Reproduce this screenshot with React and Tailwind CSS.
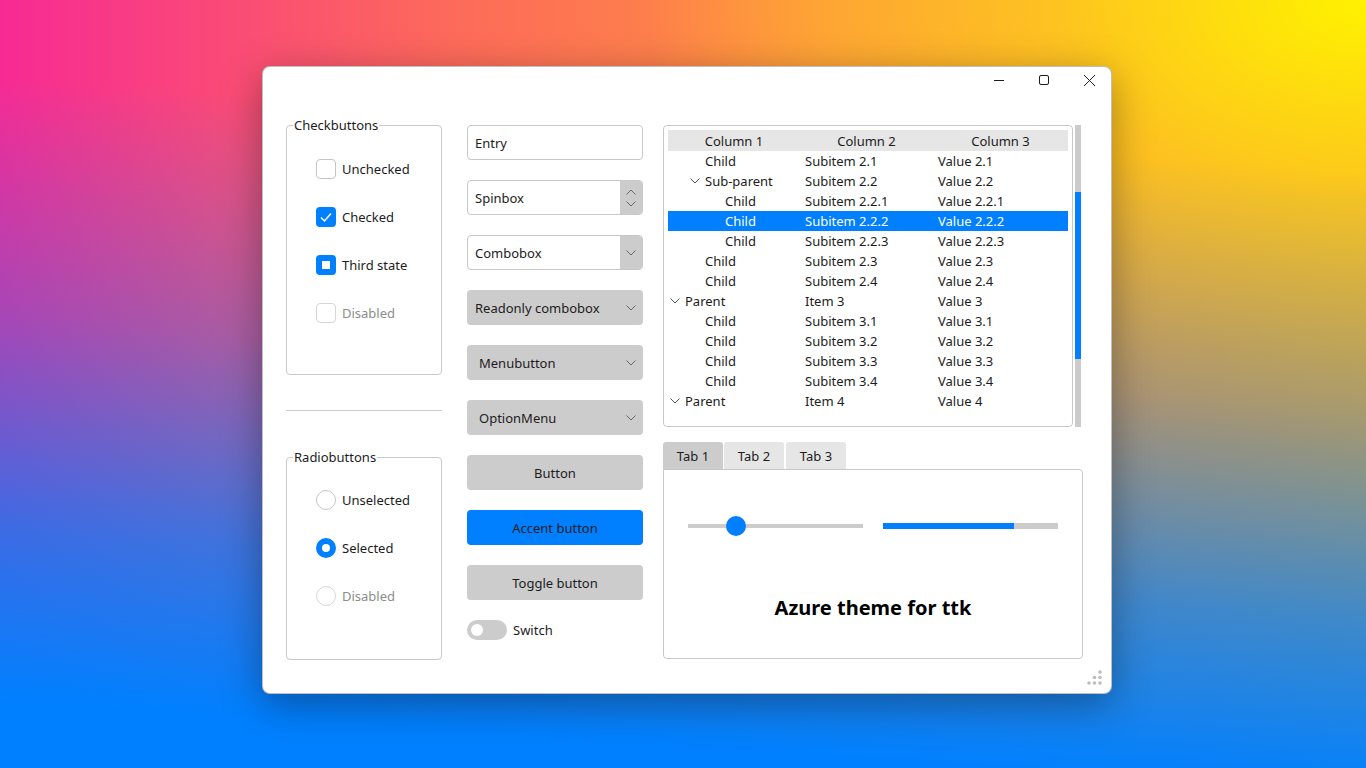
import React from "react";

const TXT = "text-[#1c1c1c]";

function Chevron({ up = false, color = "#6a6a6a" }) {
  return (
    <svg width="10" height="6" viewBox="0 0 10 6" className="block">
      <polyline
        points={up ? "0.5,5.5 5,1 9.5,5.5" : "0.5,0.5 5,5 9.5,0.5"}
        fill="none"
        stroke={color}
        strokeWidth="1"
      />
    </svg>
  );
}

function CheckRow({ state, label, disabled }) {
  let box;
  if (state === "checked") {
    box = (
      <div className="w-[20px] h-[20px] rounded-[4px] bg-[#007fff] flex items-center justify-center">
        <svg width="20" height="20" viewBox="0 0 20 20">
          <polyline points="5,10.5 8.5,14 15,6.5" fill="none" stroke="#fff" strokeWidth="1.5" />
        </svg>
      </div>
    );
  } else if (state === "third") {
    box = (
      <div className="w-[20px] h-[20px] rounded-[4px] bg-[#007fff] flex items-center justify-center">
        <div className="w-[8px] h-[8px] bg-white" />
      </div>
    );
  } else {
    box = (
      <div
        className={`w-[20px] h-[20px] rounded-[4px] border ${
          disabled ? "border-[#d6d6d6]" : "border-[#c4c4c4]"
        } bg-white`}
      />
    );
  }
  return (
    <div className="flex items-center h-[20px] gap-[6px]">
      {box}
      <span className={disabled ? "text-[#8c8c8c]" : TXT}>{label}</span>
    </div>
  );
}

function RadioRow({ selected, label, disabled }) {
  return (
    <div className="flex items-center h-[20px] gap-[6px]">
      {selected ? (
        <div className="w-[20px] h-[20px] rounded-full bg-[#007fff] flex items-center justify-center">
          <div className="w-[8px] h-[8px] rounded-full bg-white" />
        </div>
      ) : (
        <div
          className={`w-[20px] h-[20px] rounded-full border ${
            disabled ? "border-[#d6d6d6]" : "border-[#c4c4c4]"
          } bg-white`}
        />
      )}
      <span className={disabled ? "text-[#8c8c8c]" : TXT}>{label}</span>
    </div>
  );
}

function LabelFrame({ label, className, children }) {
  return (
    <div className={`relative border border-[#c8c8c8] rounded-[4px] ${className}`}>
      <span className={`absolute top-[-10px] left-[6px] bg-white px-[1px] leading-[18px] ${TXT}`}>
        {label}
      </span>
      {children}
    </div>
  );
}

const rows = [
  { lvl: 1, c: ["Child", "Subitem 2.1", "Value 2.1"] },
  { lvl: 1, exp: true, c: ["Sub-parent", "Subitem 2.2", "Value 2.2"] },
  { lvl: 2, c: ["Child", "Subitem 2.2.1", "Value 2.2.1"] },
  { lvl: 2, sel: true, c: ["Child", "Subitem 2.2.2", "Value 2.2.2"] },
  { lvl: 2, c: ["Child", "Subitem 2.2.3", "Value 2.2.3"] },
  { lvl: 1, c: ["Child", "Subitem 2.3", "Value 2.3"] },
  { lvl: 1, c: ["Child", "Subitem 2.4", "Value 2.4"] },
  { lvl: 0, exp: true, c: ["Parent", "Item 3", "Value 3"] },
  { lvl: 1, c: ["Child", "Subitem 3.1", "Value 3.1"] },
  { lvl: 1, c: ["Child", "Subitem 3.2", "Value 3.2"] },
  { lvl: 1, c: ["Child", "Subitem 3.3", "Value 3.3"] },
  { lvl: 1, c: ["Child", "Subitem 3.4", "Value 3.4"] },
  { lvl: 0, exp: true, c: ["Parent", "Item 4", "Value 4"] },
];

const indent = { 0: "w-0", 1: "w-[20px]", 2: "w-[40px]" };

export default function App() {
  return (
    <div className="w-full h-[768px] overflow-hidden pl-[262px] pt-[66px] bg-[linear-gradient(184deg,rgba(0,128,255,0)_20%,rgba(0,128,255,0.33)_48%,rgba(0,128,255,0.75)_72%,#0080ff_92%),radial-gradient(ellipse_720px_430px_at_100%_0%,#fff200_0%,rgba(255,220,20,0.6)_45%,rgba(255,200,40,0)_100%),linear-gradient(to_right,#f72a94,#fd6a5a_33%,#fe9040_60%,#f8a428_100%)] font-['Noto_Sans',sans-serif] text-[13px]">
      <div className="relative w-[850px] h-[628px] bg-white rounded-[8px] border border-black/25 shadow-[0_10px_40px_rgba(0,0,0,0.35)] flex flex-col">
        {/* title bar */}
        <div className="h-[30px] flex justify-end items-start pt-[8px] pr-[16px] gap-[35px]">
          <svg width="10" height="10" viewBox="0 0 10 10">
            <line x1="0" y1="5.5" x2="10" y2="5.5" stroke="#1c1c1c" strokeWidth="1" />
          </svg>
          <svg width="10" height="10" viewBox="0 0 10 10">
            <rect x="0.5" y="0.5" width="9" height="9" rx="1.5" fill="none" stroke="#1c1c1c" strokeWidth="1" />
          </svg>
          <svg width="11" height="11" viewBox="0 0 11 11">
            <line x1="0" y1="0" x2="11" y2="11" stroke="#1c1c1c" strokeWidth="1" />
            <line x1="11" y1="0" x2="0" y2="11" stroke="#1c1c1c" strokeWidth="1" />
          </svg>
        </div>

        {/* content */}
        <div className="flex pl-[23px] pt-[28px] leading-[20px]">
          {/* column 1 */}
          <div className="w-[156px] flex flex-col">
            <LabelFrame label="Checkbuttons" className="h-[250px]">
              <div className="flex flex-col pt-[33px] pl-[29px] gap-[28px]">
                <CheckRow state="unchecked" label="Unchecked" />
                <CheckRow state="checked" label="Checked" />
                <CheckRow state="third" label="Third state" />
                <CheckRow state="unchecked" label="Disabled" disabled />
              </div>
            </LabelFrame>
            <div className="mt-[35px] h-px bg-[#cdcdcd]" />
            <LabelFrame label="Radiobuttons" className="mt-[46px] h-[203px]">
              <div className="flex flex-col pt-[32px] pl-[29px] gap-[28px]">
                <RadioRow label="Unselected" />
                <RadioRow selected label="Selected" />
                <RadioRow label="Disabled" disabled />
              </div>
            </LabelFrame>
          </div>

          {/* column 2 */}
          <div className={`ml-[25px] w-[176px] flex flex-col gap-[20px] ${TXT}`}>
            <div className="h-[35px] border border-[#c8c8c8] rounded-[4px] pl-[7px] flex items-center">Entry</div>
            <div className="h-[35px] border border-[#c8c8c8] rounded-[4px] flex overflow-hidden">
              <div className="flex-1 pl-[7px] flex items-center">Spinbox</div>
              <div className="w-[22px] bg-[#cccccc] flex flex-col items-center justify-center gap-[6px]">
                <Chevron up />
                <Chevron />
              </div>
            </div>
            <div className="h-[35px] border border-[#c8c8c8] rounded-[4px] flex overflow-hidden">
              <div className="flex-1 pl-[7px] flex items-center">Combobox</div>
              <div className="w-[22px] bg-[#cccccc] flex items-center justify-center">
                <Chevron />
              </div>
            </div>
            <div className="h-[35px] bg-[#cccccc] rounded-[4px] pl-[8px] pr-[7px] flex items-center justify-between">
              <span>Readonly combobox</span>
              <Chevron />
            </div>
            <div className="h-[35px] bg-[#cccccc] rounded-[4px] pl-[12px] pr-[7px] flex items-center justify-between">
              <span>Menubutton</span>
              <Chevron />
            </div>
            <div className="h-[35px] bg-[#cccccc] rounded-[4px] pl-[12px] pr-[7px] flex items-center justify-between">
              <span>OptionMenu</span>
              <Chevron />
            </div>
            <div className="h-[35px] bg-[#cccccc] rounded-[4px] flex items-center justify-center">Button</div>
            <div className="h-[35px] bg-[#007fff] rounded-[4px] flex items-center justify-center">Accent button</div>
            <div className="h-[35px] bg-[#cccccc] rounded-[4px] flex items-center justify-center">Toggle button</div>
            <div className="h-[20px] flex items-center gap-[6px]">
              <div className="w-[40px] h-[20px] rounded-full bg-[#cccccc] flex items-center pl-[4px]">
                <div className="w-[12px] h-[12px] rounded-full bg-white" />
              </div>
              <span>Switch</span>
            </div>
          </div>

          {/* column 3 */}
          <div className={`ml-[20px] w-[420px] flex flex-col ${TXT}`}>
            <div className="flex h-[302px]">
              <div className="w-[410px] border border-[#c8c8c8] rounded-[4px] p-[4px]">
                <div className="h-[21px] bg-[#e6e6e6] flex items-center">
                  <div className="w-[132px] text-center">Column 1</div>
                  <div className="w-[133px] text-center">Column 2</div>
                  <div className="w-[135px] text-center">Column 3</div>
                </div>
                {rows.map((r, i) => (
                  <div
                    key={i}
                    className={`h-[20px] flex items-center ${r.sel ? "bg-[#007fff] text-white" : ""}`}
                  >
                    <div className="w-[132px] flex items-center">
                      <div className={indent[r.lvl]} />
                      <div className="w-[17px] flex items-center pl-[2px]">
                        {r.exp && <Chevron color="#555555" />}
                      </div>
                      <span>{r.c[0]}</span>
                    </div>
                    <div className="w-[133px] pl-[5px]">{r.c[1]}</div>
                    <div className="w-[135px] pl-[5px]">{r.c[2]}</div>
                  </div>
                ))}
              </div>
              <div className="ml-[2px] w-[6px] h-[302px] bg-[#cccccc] flex flex-col">
                <div className="h-[67px]" />
                <div className="h-[167px] bg-[#007fff]" />
              </div>
            </div>

            {/* notebook */}
            <div className="mt-[15px] flex h-[27px] items-end">
              <div className="w-[60px] h-[27px] bg-[#cccccc] rounded-t-[3px] flex items-center justify-center">Tab 1</div>
              <div className="ml-[1px] w-[60px] h-[27px] bg-[#e6e6e6] rounded-t-[3px] flex items-center justify-center">Tab 2</div>
              <div className="ml-[2px] w-[60px] h-[27px] bg-[#e6e6e6] rounded-t-[3px] flex items-center justify-center">Tab 3</div>
            </div>
            <div className="h-[190px] border border-[#c8c8c8] rounded-b-[4px] rounded-tr-[4px] flex flex-col items-center">
              <div className="mt-[46px] h-[20px] w-full px-[24px] flex items-center gap-[20px]">
                <div className="relative w-[175px] h-[20px] flex items-center">
                  <div className="w-full h-[4px] bg-[#cccccc]" />
                  <div className="absolute left-[38px] top-0 w-[20px] h-[20px] rounded-full bg-[#007fff]" />
                </div>
                <div className="w-[175px] h-[6px] bg-[#cccccc] flex">
                  <div className="w-[131px] h-full bg-[#007fff]" />
                </div>
              </div>
              <div className="mt-[58px] text-[20px] leading-[28px] font-bold text-black">Azure theme for ttk</div>
            </div>
          </div>
        </div>

        {/* size grip */}
        <svg
          width="15"
          height="15"
          viewBox="0 0 15 15"
          className="absolute right-[9px] bottom-[8px]"
        >
          <circle cx="13" cy="2" r="1.8" fill="#bdbdbd" />
          <circle cx="7.5" cy="7.5" r="1.8" fill="#bdbdbd" />
          <circle cx="13" cy="7.5" r="1.8" fill="#bdbdbd" />
          <circle cx="2" cy="13" r="1.8" fill="#bdbdbd" />
          <circle cx="7.5" cy="13" r="1.8" fill="#bdbdbd" />
          <circle cx="13" cy="13" r="1.8" fill="#bdbdbd" />
        </svg>
      </div>
    </div>
  );
}
